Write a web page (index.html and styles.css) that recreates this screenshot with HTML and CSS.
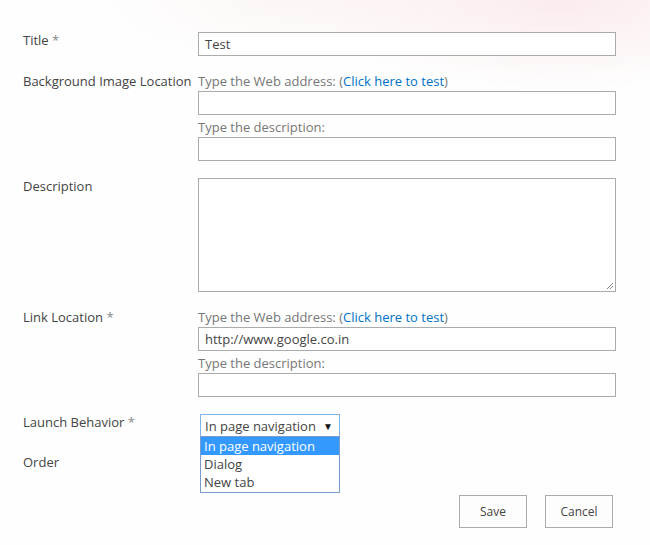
FILE: index.html
```html
<!DOCTYPE html>
<html>
<head>
<meta charset="utf-8">
<link rel="stylesheet" href="styles.css">
</head>
<body>
<div class="page">
  <form class="form">
    <div class="row">
      <div class="label">Title <span class="req">*</span></div>
      <div class="field"><div class="input">Test</div></div>
    </div>
    <div class="row">
      <div class="label">Background Image Location</div>
      <div class="field">
        <div class="hint">Type the Web address: (<a class="link">Click here to test</a>)</div>
        <div class="input"></div>
        <div class="hint">Type the description:</div>
        <div class="input"></div>
      </div>
    </div>
    <div class="row">
      <div class="label">Description</div>
      <div class="field">
        <div class="textarea">
          <svg class="grip" width="8" height="8" viewBox="0 0 8 8"><path d="M7 1 L1 7 M7 4 L4 7" stroke="#888" stroke-width="1" fill="none"/></svg>
        </div>
      </div>
    </div>
    <div class="row">
      <div class="label">Link Location <span class="req">*</span></div>
      <div class="field">
        <div class="hint">Type the Web address: (<a class="link">Click here to test</a>)</div>
        <div class="input">http://www.google.co.in</div>
        <div class="hint">Type the description:</div>
        <div class="input"></div>
      </div>
    </div>
    <div class="row">
      <div class="label">Launch Behavior <span class="req">*</span></div>
      <div class="field">
        <div class="select-wrap">
          <div class="select"><span>In page navigation</span><span class="arrow">▼</span></div>
          <ul class="options">
            <li class="opt selected">In page navigation</li>
            <li class="opt">Dialog</li>
            <li class="opt">New tab</li>
          </ul>
        </div>
      </div>
    </div>
    <div class="row">
      <div class="label">Order</div>
      <div class="field"></div>
    </div>
    <div class="buttons">
      <button type="button" class="btn">Save</button>
      <button type="button" class="btn">Cancel</button>
    </div>
  </form>
</div>
</body>
</html>
```
FILE: styles.css
```css
html, body {
  margin: 0;
  padding: 0;
}
body {
  width: 650px;
  height: 545px;
  overflow: hidden;
  background:
    radial-gradient(ellipse 260px 90px at 560px 0px, rgba(248, 220, 222, 0.55), rgba(255,255,255,0) 100%),
    radial-gradient(ellipse 200px 60px at 300px 0px, rgba(250, 238, 236, 0.5), rgba(255,255,255,0) 100%),
    #fefefe;
  font-family: "Open Sans", "Noto Sans", sans-serif;
  font-size: 13px;
  color: #444;
}
.page {
  padding: 32px 0 0 23px;
}
.form {
  width: 593px;
}
.row {
  display: grid;
  grid-template-columns: 175px 418px;
  margin-bottom: 17px;
}
.label {
  line-height: 16px;
  color: #444;
  white-space: nowrap;
}
.req {
  color: #888;
}
.field {
  display: flex;
  flex-direction: column;
}
.hint {
  line-height: 16px;
  color: #777;
  margin-bottom: 2px;
}
.input + .hint {
  margin-top: 4px;
}
.link {
  color: #0072c6;
  text-decoration: none;
}
.input {
  box-sizing: border-box;
  height: 24px;
  border: 1px solid #ababab;
  background: #fff;
  padding: 0 6px;
  line-height: 22px;
  font-size: 13px;
  color: #444;
}
.textarea {
  box-sizing: border-box;
  height: 114px;
  border: 1px solid #ababab;
  background: #fff;
  position: relative;
}
.grip {
  position: absolute;
  right: 1px;
  bottom: 1px;
}
.select-wrap {
  position: relative;
  margin-left: 2px;
  width: 140px;
}
.select {
  box-sizing: border-box;
  height: 23px;
  border: 1px solid #7eb4ea;
  background: #fff;
  display: flex;
  align-items: center;
  justify-content: space-between;
  padding: 0 6px 0 4px;
  font-size: 13px;
  color: #444;
}
.arrow {
  font-size: 10px;
  color: #111;
}
.options {
  position: absolute;
  left: 0;
  top: 22px;
  width: 140px;
  box-sizing: border-box;
  margin: 0;
  padding: 0 0 1px;
  list-style: none;
  border: 1px solid #7a9ccc;
  background: #fff;
  z-index: 2;
}
.opt {
  height: 18px;
  line-height: 18px;
  padding-left: 3px;
  font-size: 13px;
  color: #444;
}
.opt.selected {
  background: #3399ff;
  color: #fff;
}
.buttons {
  display: flex;
  justify-content: flex-end;
  gap: 18px;
  margin-top: 25px;
  padding-right: 3px;
}
.btn {
  width: 68px;
  height: 33px;
  border: 1px solid #ababab;
  background: #fdfdfd;
  font-family: "Open Sans", "Noto Sans", sans-serif;
  font-size: 12px;
  color: #444;
  padding: 0;
}
```
